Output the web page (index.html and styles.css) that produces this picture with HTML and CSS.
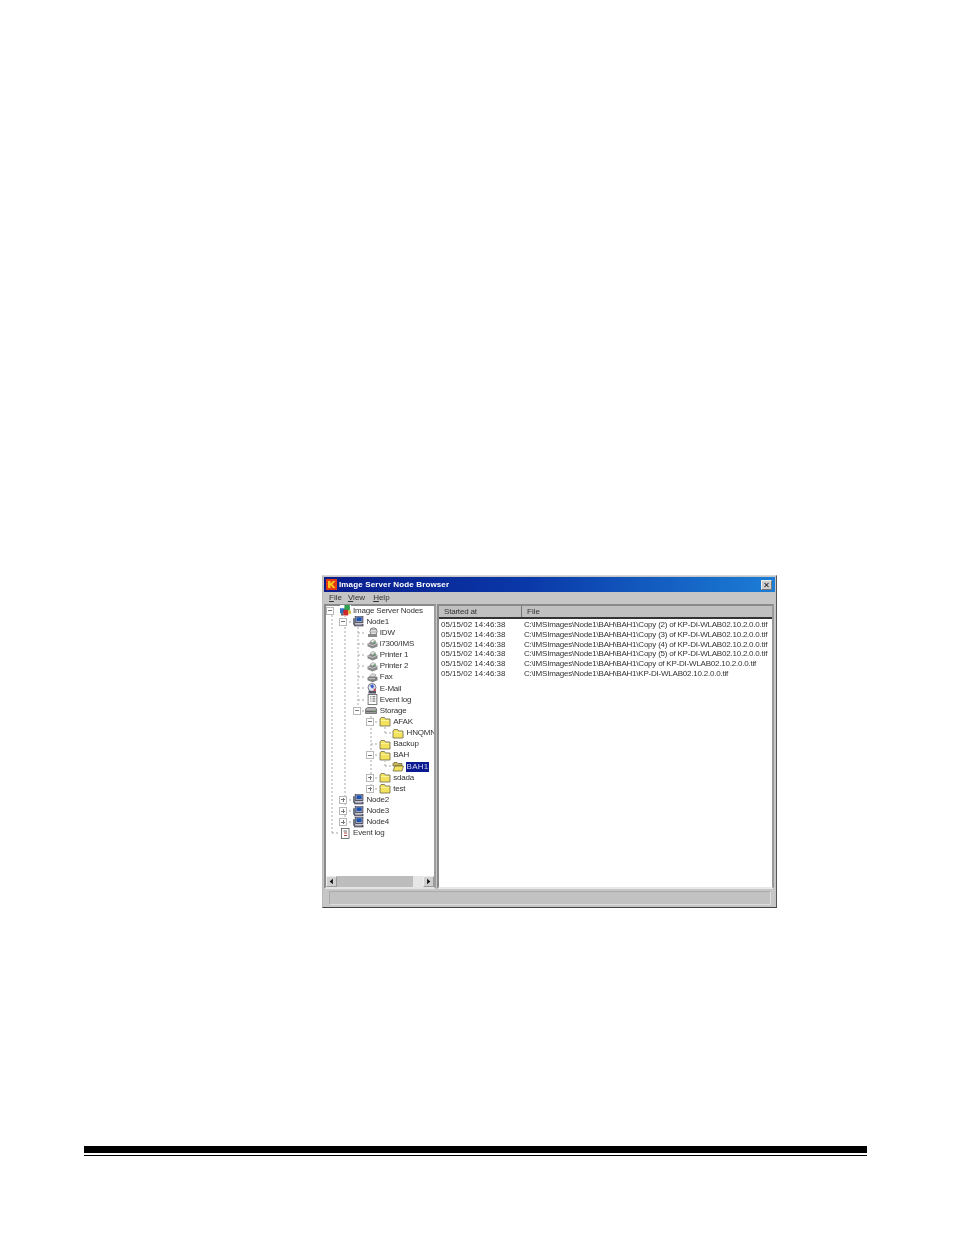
FILE: index.html
```html
<!DOCTYPE html>
<html lang="en">
<head>
<meta charset="utf-8">
<title>Image Server Node Browser</title>
<link rel="stylesheet" href="styles.css">
</head>
<body>
<svg class="defs" width="0" height="0" aria-hidden="true">
  <defs>
    <symbol id="i-node" viewBox="0 0 10 10">
      <rect x="2" y="0" width="7" height="6" fill="#a8a8b8" stroke="#334"  stroke-width=".7"/>
      <rect x="3.2" y="1.2" width="4.6" height="3.4" fill="#1d55b5"/>
      <rect x="0" y="2" width="2" height="6" fill="#707888"/>
      <rect x="1" y="7" width="8.5" height="2.4" fill="#556" />
      <rect x="2" y="7.6" width="6" height=".7" fill="#ccd"/>
    </symbol>
    <symbol id="i-root" viewBox="0 0 10 10">
      <rect x="0" y="3" width="4.5" height="4.5" fill="#2a70c0"/>
      <rect x="4" y="0" width="5" height="5" fill="#30a050"/>
      <rect x="3" y="4.5" width="4.5" height="5" fill="#d02828"/>
      <rect x="7.5" y="5" width="2.5" height="3" fill="#d8c030"/>
      <rect x="1" y="7.5" width="2" height="2" fill="#555"/>
    </symbol>
    <symbol id="i-drive" viewBox="0 0 11 10">
      <ellipse cx="6.5" cy="4" rx="3.6" ry="3.7" fill="#e2e2e2" stroke="#666" stroke-width=".8"/>
      <rect x="1" y="6.5" width="9" height="3" fill="#8a8a8a"/>
      <path d="M4 2h5M4 4.5h5" stroke="#888" stroke-width=".6"/>
    </symbol>
    <symbol id="i-printer" viewBox="0 0 11 10">
      <path d="M0.5 5 5.5 2.5 10.5 4.5V8L5.5 10 0.5 7.8Z" fill="#8a8a8a"/>
      <path d="M3 3 6 .8 9 2.6 6 4.8Z" fill="#e4e4e4" stroke="#666" stroke-width=".4"/>
      <path d="M.5 5 5.5 7 10.5 4.5" fill="none" stroke="#d8d8d8" stroke-width=".8"/>
      <rect x="6.5" y="3" width="1.8" height="1.8" fill="#4a9a50"/>
    </symbol>
    <symbol id="i-fax" viewBox="0 0 11 10">
      <path d="M.5 5 5.5 3 10.5 4.5V7.8L5.5 9.8.5 7.8Z" fill="#808080"/>
      <path d="M2 4 5 1 9 2.2 7.5 4.4Z" fill="#dcdcdc" stroke="#666" stroke-width=".4"/>
      <path d="M2 6.2h6" stroke="#ddd" stroke-width=".8"/>
    </symbol>
    <symbol id="i-mail" viewBox="0 0 11 11">
      <circle cx="5" cy="4.5" r="4" fill="#dfe4f0" stroke="#445" stroke-width=".7"/>
      <path d="M3 2.5 6 1.5 7 4 5 5.5Z" fill="#3658c8"/>
      <path d="M6.5 5 9 7 7.5 9Z" fill="#d83030"/>
      <rect x="1.5" y="8" width="7.5" height="2.6" fill="#556"/>
    </symbol>
    <symbol id="i-log" viewBox="0 0 10 10">
      <rect x="1" y=".5" width="8" height="9" fill="#fff" stroke="#666" stroke-width=".8"/>
      <path d="M3 2.5h1M5 2.5h2.5M3 4.5h1M5 4.5h2.5M3 6.5h1M5 6.5h2.5" stroke="#444" stroke-width=".8"/>
    </symbol>
    <symbol id="i-log2" viewBox="0 0 10 11">
      <rect x="1" y=".5" width="7.5" height="10" fill="#fff" stroke="#555" stroke-width=".8"/>
      <path d="M3 3h3.5" stroke="#444" stroke-width=".8"/>
      <path d="M3.5 5h3M3.5 7.5h3" stroke="#a03030" stroke-width=".9"/>
    </symbol>
    <symbol id="i-storage" viewBox="0 0 12 10">
      <path d="M.5 3.5 2.5 2h8l1 1.5V8H.5Z" fill="#b0b0b0" stroke="#555" stroke-width=".7"/>
      <rect x="1" y="5.2" width="10" height="1.6" fill="#666"/>
      <rect x="8.5" y="5.4" width="1.4" height="1" fill="#50b050"/>
    </symbol>
    <symbol id="i-folder" viewBox="0 0 12 10">
      <path d="M1 2.5 2 1h3.5l1 1.5h4.5V9.5H1Z" fill="#f2e25c" stroke="#6e6a50" stroke-width=".8"/>
      <path d="M2 4h8" stroke="#fff8b0" stroke-width=".8"/>
    </symbol>
    <symbol id="i-open" viewBox="0 0 12 10">
      <path d="M1 2 2 1h3l1 1h4v2.5H1Z" fill="#c8b850" stroke="#5e5840" stroke-width=".7"/>
      <path d="M1 9.5 3 4.5h8.5L10 9.5Z" fill="#f2e25c" stroke="#5e5840" stroke-width=".7"/>
    </symbol>
  </defs>
</svg>

<main class="page">
  <section class="window">
    <header class="titlebar">
      <svg class="logo" viewBox="0 0 11 11" aria-hidden="true">
        <rect width="11" height="11" fill="#e23a12"/>
        <path d="M2 2h2.5v2.5L7 2h2.4L6.4 5.3 9.5 9H7L4.5 6V9H2Z" fill="#f8c820"/>
      </svg>
      <span class="title">Image Server Node Browser</span>
      <span class="close">
        <svg viewBox="0 0 11 10" aria-hidden="true"><path d="M3 2.5 8 7.5M8 2.5 3 7.5" stroke="#222" stroke-width="1.3"/></svg>
      </span>
    </header>
    <nav class="menubar">
      <span class="menu m-file"><u>F</u>ile</span>
      <span class="menu m-view"><u>V</u>iew</span>
      <span class="menu m-help"><u>H</u>elp</span>
    </nav>
    <div class="panes">
      <aside class="tree-pane">
        <svg class="guides" viewBox="326 606 108 270" aria-hidden="true">
          <path d="M332 615V833M332 833H340M345 615V822M345 622H352M345 800H352M345 811H352M345 822H352M358 627V711M358 633H365M358 644H365M358 655H365M358 666H365M358 677H365M358 688H365M358 700H365M358 711H365M371 716V789M371 722H378M371 744H378M371 755H378M371 778H378M371 789H378M385 727V733M385 733H392M385 760V766M385 766H392" fill="none" stroke="#a8a8a8" stroke-width="1" stroke-dasharray="2 2"/>
        </svg>
        <ul class="tree">
          <li class="row d0"><span class="exp"><i class="minus"></i></span><svg class="ic"><use href="#i-root"/></svg><span class="lbl">Image Server Nodes</span></li>
          <li class="row d1"><span class="exp"><i class="minus"></i></span><svg class="ic"><use href="#i-node"/></svg><span class="lbl">Node1</span></li>
          <li class="row d2"><span class="exp"></span><svg class="ic"><use href="#i-drive"/></svg><span class="lbl">IDW</span></li>
          <li class="row d2"><span class="exp"></span><svg class="ic"><use href="#i-printer"/></svg><span class="lbl">i7300/IMS</span></li>
          <li class="row d2"><span class="exp"></span><svg class="ic"><use href="#i-printer"/></svg><span class="lbl">Printer 1</span></li>
          <li class="row d2"><span class="exp"></span><svg class="ic"><use href="#i-printer"/></svg><span class="lbl">Printer 2</span></li>
          <li class="row d2"><span class="exp"></span><svg class="ic"><use href="#i-fax"/></svg><span class="lbl">Fax</span></li>
          <li class="row d2"><span class="exp"></span><svg class="ic"><use href="#i-mail"/></svg><span class="lbl">E-Mail</span></li>
          <li class="row d2"><span class="exp"></span><svg class="ic"><use href="#i-log"/></svg><span class="lbl">Event log</span></li>
          <li class="row d2"><span class="exp"><i class="minus"></i></span><svg class="ic wide"><use href="#i-storage"/></svg><span class="lbl">Storage</span></li>
          <li class="row d3"><span class="exp"><i class="minus"></i></span><svg class="ic wide"><use href="#i-folder"/></svg><span class="lbl">AFAK</span></li>
          <li class="row d4"><span class="exp"></span><svg class="ic wide"><use href="#i-folder"/></svg><span class="lbl">HNQMN</span></li>
          <li class="row d3"><span class="exp"></span><svg class="ic wide"><use href="#i-folder"/></svg><span class="lbl">Backup</span></li>
          <li class="row d3"><span class="exp"><i class="minus"></i></span><svg class="ic wide"><use href="#i-folder"/></svg><span class="lbl">BAH</span></li>
          <li class="row d4"><span class="exp"></span><svg class="ic wide"><use href="#i-open"/></svg><span class="lbl selected">BAH1</span></li>
          <li class="row d3"><span class="exp"><i class="plus"></i></span><svg class="ic wide"><use href="#i-folder"/></svg><span class="lbl">sdada</span></li>
          <li class="row d3"><span class="exp"><i class="plus"></i></span><svg class="ic wide"><use href="#i-folder"/></svg><span class="lbl">test</span></li>
          <li class="row d1"><span class="exp"><i class="plus"></i></span><svg class="ic"><use href="#i-node"/></svg><span class="lbl">Node2</span></li>
          <li class="row d1"><span class="exp"><i class="plus"></i></span><svg class="ic"><use href="#i-node"/></svg><span class="lbl">Node3</span></li>
          <li class="row d1"><span class="exp"><i class="plus"></i></span><svg class="ic"><use href="#i-node"/></svg><span class="lbl">Node4</span></li>
          <li class="row d0"><span class="exp"></span><svg class="ic"><use href="#i-log2"/></svg><span class="lbl">Event log</span></li>
        </ul>
        <div class="scrollbar">
          <span class="sb-btn"><svg viewBox="0 0 10 10" aria-hidden="true"><path d="M6.5 2v6L3 5Z" fill="#111"/></svg></span>
          <span class="sb-thumb"></span>
          <span class="sb-track"></span>
          <span class="sb-btn"><svg viewBox="0 0 10 10" aria-hidden="true"><path d="M3.5 2v6L7 5Z" fill="#111"/></svg></span>
        </div>
      </aside>
      <section class="list-pane">
        <div class="list-head">
          <span class="col-a">Started at</span>
          <span class="col-b">File</span>
        </div>
        <ul class="list">
          <li class="item"><span class="col-a">05/15/02 14:46:38</span><span class="col-b">C:\IMSImages\Node1\BAH\BAH1\Copy (2) of KP-DI-WLAB02.10.2.0.0.tif</span></li>
          <li class="item"><span class="col-a">05/15/02 14:46:38</span><span class="col-b">C:\IMSImages\Node1\BAH\BAH1\Copy (3) of KP-DI-WLAB02.10.2.0.0.tif</span></li>
          <li class="item"><span class="col-a">05/15/02 14:46:38</span><span class="col-b">C:\IMSImages\Node1\BAH\BAH1\Copy (4) of KP-DI-WLAB02.10.2.0.0.tif</span></li>
          <li class="item"><span class="col-a">05/15/02 14:46:38</span><span class="col-b">C:\IMSImages\Node1\BAH\BAH1\Copy (5) of KP-DI-WLAB02.10.2.0.0.tif</span></li>
          <li class="item"><span class="col-a">05/15/02 14:46:38</span><span class="col-b">C:\IMSImages\Node1\BAH\BAH1\Copy of KP-DI-WLAB02.10.2.0.0.tif</span></li>
          <li class="item"><span class="col-a">05/15/02 14:46:38</span><span class="col-b">C:\IMSImages\Node1\BAH\BAH1\KP-DI-WLAB02.10.2.0.0.tif</span></li>
        </ul>
      </section>
    </div>
    <footer class="statusbar"><div class="status-cell"></div></footer>
  </section>
  <hr class="rule-thick">
  <hr class="rule-thin">
</main>
</body>
</html>
```
FILE: styles.css
```css
* { box-sizing: border-box; }
html, body { margin: 0; padding: 0; background: #fff; }
body { font-family: "Liberation Sans", Arial, sans-serif; }
.defs { position: absolute; }
.page { width: 954px; height: 1235px; padding: 575px 87px 0 84px; overflow: hidden; }

.window {
  width: 455px; height: 333px; margin-left: 238px;
  display: flex; flex-direction: column;
  background: #c6c6c6;
  border-top: 1px solid #d8d8d8; border-left: 1px solid #bbb;
  border-right: 1px solid #555; border-bottom: 1px solid #444;
  filter: blur(.45px);
  font-size: 8px; color: #222;
}

.titlebar {
  height: 15px; margin: 1px 1px 0;
  display: flex; align-items: center; padding: 0 3px 0 2px;
  background: linear-gradient(90deg, #0a1c8c 0%, #0a38a8 45%, #1c7ed6 100%);
}
.logo { width: 11px; height: 11px; flex: none; }
.title { margin-left: 2px; color: #fff; font-weight: 700; font-size: 8px; letter-spacing: .14px; white-space: nowrap; }
.close { margin-left: auto; width: 11px; height: 10px; background: #cfcfcf; border: 1px solid #777; border-top-color: #eee; border-left-color: #eee; display: flex; }
.close svg { width: 100%; height: 100%; }

.menubar { height: 12px; display: flex; align-items: center; flex: none; font-size: 8px; padding-bottom: 1px; }
.menu { color: #333; }
.m-file { margin-left: 6px; }
.m-view { margin-left: 6px; }
.m-help { margin-left: 8px; }

.panes { flex: 1; display: flex; min-height: 0; padding: 0 2px 0 1px; gap: 1px; }

.tree-pane {
  width: 112px; flex: none; position: relative; display: flex; flex-direction: column;
  background: #fff;
  border: 2px solid #8a8a8a; border-right-color: #9d9d9d; border-bottom-color: #e4e4e4;
}
.guides { position: absolute; left: 0; top: 0; width: 108px; height: 270px; pointer-events: none; }
.tree { list-style: none; margin: -1px 0 0; padding: 0; flex: 1; position: relative; overflow: hidden; }
.row { height: 11.15px; display: flex; align-items: center; white-space: nowrap; letter-spacing: -.2px; color: #333; }
.d0 { padding-left: 0; }
.d1 { padding-left: 13.4px; }
.d2 { padding-left: 26.8px; }
.d3 { padding-left: 40.2px; }
.d4 { padding-left: 53.6px; }
.exp { width: 14px; flex: none; display: flex; align-items: center; }
.exp i { position: relative; display: block; width: 8px; height: 8px; background: #fff; border: 1px solid #b8b8b8; }
.exp i::before { content: ""; position: absolute; left: 1px; right: 1px; top: 2.5px; height: 1px; background: #777; }
.exp .plus::after { content: ""; position: absolute; top: 1px; bottom: 1px; left: 2.5px; width: 1px; background: #777; }
.ic { width: 11px; height: 11px; flex: none; margin-right: 2px; background: #fff; }
.ic.wide { width: 12px; margin-left: -1.5px; margin-right: 2.5px; }
.lbl { line-height: 10px; }
.selected { background: #0a1a90; color: #d8d8f0; padding: 0 1px; margin-left: -1px; letter-spacing: .2px; }

.scrollbar { height: 11px; flex: none; display: flex; background: #e6e6e6; }
.sb-btn { width: 11px; flex: none; background: #cfcfcf; border: 1px solid #999; border-top-color: #eee; border-left-color: #eee; display: flex; }
.sb-btn svg { width: 100%; height: 100%; }
.sb-thumb { flex: 1; background: #bdbdbd; }
.sb-track { width: 10px; flex: none; background: #e6e6e6; }

.list-pane {
  flex: 1; min-width: 0; background: #fff;
  border: 2px solid #8a8a8a; border-right-color: #999; border-bottom-color: #e8e8e8;
  display: flex; flex-direction: column;
}
.list-head {
  height: 13px; flex: none; display: flex; align-items: center;
  background: #c0c0c0; border-bottom: 2px solid #333; color: #333;
}
.col-a { width: 83px; flex: none; padding-left: 2px; }
.col-b { flex: 1; white-space: nowrap; padding-left: 2px; }
.list-head .col-a { padding-left: 5px; height: 100%; line-height: 11px; border-right: 1px solid #777; letter-spacing: -.2px; }
.list-head .col-b { padding-left: 5px; line-height: 11px; }
.list { list-style: none; margin: 1px 0 0; padding: 0; }
.item { height: 9.8px; line-height: 9.8px; display: flex; color: #333; }
.item .col-b { letter-spacing: -.22px; }

.statusbar { height: 18px; flex: none; padding: 2px 5px 2px 6px; }
.status-cell { height: 100%; background: #c2c2c2; border: 1px solid #aaa; border-right-color: #ddd; border-bottom-color: #ddd; }

.rule-thick { margin: 238px 0 0; height: 7px; border: 0; background: #000; width: 783px; }
.rule-thin { margin: 2px 0 0; height: 1px; border: 0; background: #000; width: 783px; }
```
